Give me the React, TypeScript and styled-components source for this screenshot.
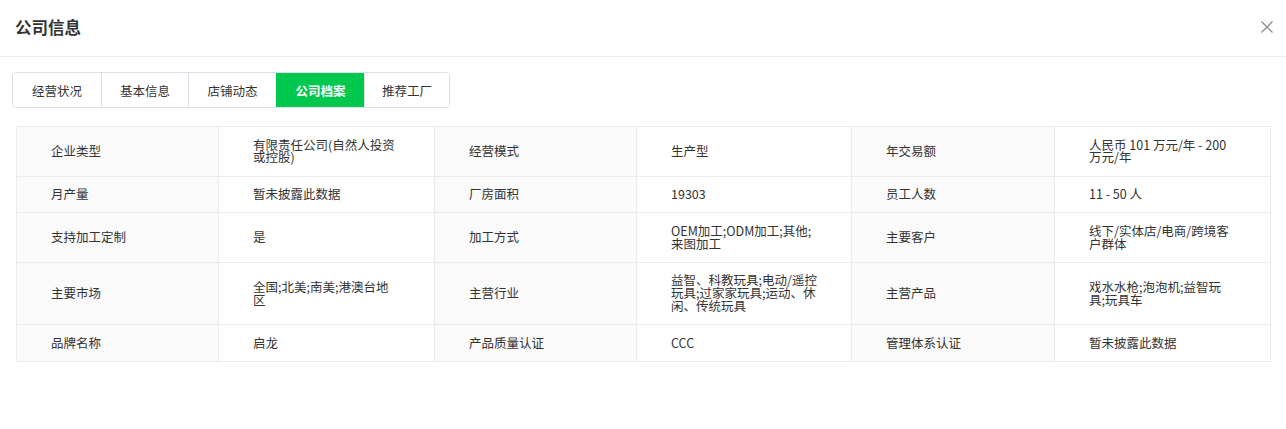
import { FC } from 'react';
import styled, { createGlobalStyle } from 'styled-components';

const Global = createGlobalStyle`
body{
  margin: 0;
  background: #fff;
  font-family: "Noto Sans CJK SC", "Noto Sans", sans-serif;
  color: #333;
}
`

const Dialog = styled.div`
width: 1286px;
height: 429px;
background: #fff;
`

const Header = styled.div`
height: 57px;
box-sizing: border-box;
border-bottom: 1px solid #ebedf0;
display: flex;
align-items: center;
justify-content: space-between;
padding: 0 12px 2px 15px;
.title{
  font: 700 16.5px "Noto Sans CJK SC", sans-serif;
  color: #333;
}
.close{
  width: 14px;
  height: 14px;
  display: flex;
  cursor: pointer;
}
`

const Tabs = styled.div`
display: inline-flex;
margin: 15px 0 0 12px;
border: 1px solid #dcdfe6;
border-radius: 4px;
overflow: hidden;
height: 36px;
box-sizing: border-box;
`

const Tab = styled.div<{ $active?: boolean; $w: number }>`
width: ${p => p.$w}px;
box-sizing: border-box;
display: flex;
align-items: center;
justify-content: center;
font-size: 12.5px;
color: ${p => p.$active ? '#fff' : '#333'};
background: ${p => p.$active ? '#00c84f' : '#fff'};
font-weight: ${p => p.$active ? 700 : 400};
border-left: 1px solid ${p => p.$active ? '#00c84f' : '#dcdfe6'};
&:first-child{
  border-left: none;
}
`

const Table = styled.table`
margin: 18px 16px 0;
width: 1254px;
border-collapse: collapse;
table-layout: fixed;
font-size: 12.5px;
td{
  border: 1px solid #ebebeb;
  padding: 11.5px 34px 11.5px 34px;
  line-height: 12.8px;
  vertical-align: middle;
  color: #333;
}
td.label{
  background: #fafafa;
}
`

const rows: string[][] = [
  ['企业类型', '有限责任公司(自然人投资或控股)', '经营模式', '生产型', '年交易额', '人民币 101 万元/年 - 200 万元/年'],
  ['月产量', '暂未披露此数据', '厂房面积', '19303', '员工人数', '11 - 50 人'],
  ['支持加工定制', '是', '加工方式', 'OEM加工;ODM加工;其他;来图加工', '主要客户', '线下/实体店/电商/跨境客户群体'],
  ['主要市场', '全国;北美;南美;港澳台地区', '主营行业', '益智、科教玩具;电动/遥控玩具;过家家玩具;运动、休闲、传统玩具', '主营产品', '戏水水枪;泡泡机;益智玩具;玩具车'],
  ['品牌名称', '启龙', '产品质量认证', 'CCC', '管理体系认证', '暂未披露此数据'],
]

const tabs: [string, number][] = [
  ['经营状况', 88], ['基本信息', 87], ['店铺动态', 88], ['公司档案', 88], ['推荐工厂', 85],
]

const cols = [202, 216, 202, 215, 203, 216]

export default function App() {
  return (
    <Dialog>
      <Global />
      <Header>
        <div className="title">公司信息</div>
        <span className="close">
          <svg width="14" height="14" viewBox="0 0 14 14">
            <path d="M1.5 1.5 L12.5 12.5 M12.5 1.5 L1.5 12.5" stroke="#8a8d93" strokeWidth="1.3" fill="none" />
          </svg>
        </span>
      </Header>
      <Tabs>
        {tabs.map(([t, w]) => (
          <Tab key={t} $w={w} $active={t === '公司档案'}>{t}</Tab>
        ))}
      </Tabs>
      <Table>
        <colgroup>
          {cols.map((w, i) => <col key={i} style={{ width: w }} />)}
        </colgroup>
        <tbody>
          {rows.map((r, i) => (
            <tr key={i}>
              {r.map((c, j) => (
                <td key={j} className={j % 2 === 0 ? 'label' : ''}>{c}</td>
              ))}
            </tr>
          ))}
        </tbody>
      </Table>
    </Dialog>
  )
}
